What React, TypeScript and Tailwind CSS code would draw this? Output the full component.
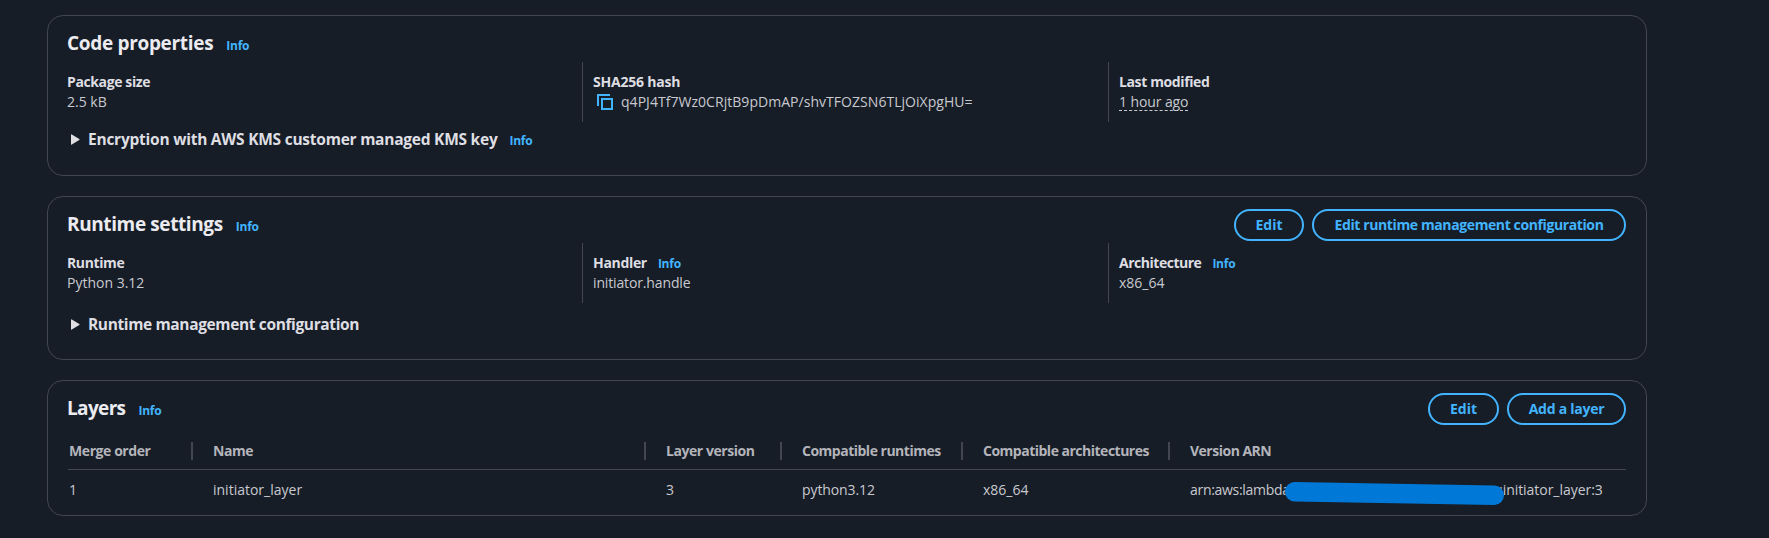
import type { ReactNode } from 'react';

function Info({ className = '' }: { className?: string }) {
  return (
    <a className={`text-[12px] font-bold tracking-[-0.25px] text-[#42b4ff] ${className}`}>Info</a>
  );
}

function Card({ className, children }: { className: string; children: ReactNode }) {
  return (
    <section className={`w-[1600px] rounded-2xl border border-[#424650] bg-[#161d26] px-5 ${className}`}>
      {children}
    </section>
  );
}

function CardHeader({ title, tracking, children }: { title: string; tracking: string; children?: ReactNode }) {
  return (
    <header className="flex h-[46px] items-start justify-between">
      <div className="-ml-px flex items-baseline gap-[13px] pt-[15px] leading-6">
        <h2 className={`text-[19px] font-bold leading-6 text-[#ebebf0] ${tracking}`}>{title}</h2>
        <Info />
      </div>
      <div className="flex gap-2 pt-3">{children}</div>
    </header>
  );
}

function Button({ className, children }: { className: string; children: ReactNode }) {
  return (
    <button
      className={`flex h-8 items-center justify-center rounded-full border-2 border-[#42b4ff] text-[14px] font-bold leading-5 whitespace-nowrap text-[#42b4ff] ${className}`}
    >
      {children}
    </button>
  );
}

function Field({ label, tracking, info, className, children }: {
  label: string;
  tracking: string;
  info?: boolean;
  className: string;
  children: ReactNode;
}) {
  return (
    <div className={`h-[60px] py-[10px] text-[14px] leading-5 text-[#c9c9d0] ${className}`}>
      <div className="flex h-5 items-baseline gap-[11px]">
        <span className={`font-bold text-[#dedee3] ${tracking}`}>{label}</span>
        {info && <Info />}
      </div>
      {children}
    </div>
  );
}

const FIRST = '-ml-px w-[515px]';
const SECOND = 'w-[526px] border-l border-[#424650] pl-[10px]';
const THIRD = 'flex-1 border-l border-[#424650] pl-[10px]';

function Expandable({ title, tracking, info, className }: {
  title: string;
  tracking: string;
  info?: boolean;
  className: string;
}) {
  return (
    <div className={`flex h-6 items-baseline pl-[3px] leading-6 ${className}`}>
      <svg className="mr-2 h-[11px] w-[9px] self-center" viewBox="0 0 9 11">
        <path d="M0 .8Q0 0 .8 .4L8.3 5Q8.8 5.5 8.3 6L.8 10.6Q0 11 0 10.2Z" fill="#dedee3" />
      </svg>
      <h3 className={`text-[15.5px] font-bold text-[#dedee3] ${tracking}`}>{title}</h3>
      {info && <Info className="ml-3" />}
    </div>
  );
}

function CopyIcon() {
  return (
    <svg className="h-4 w-4" viewBox="0 0 16 16" fill="none" stroke="#42b4ff" strokeWidth="2">
      <path d="M5 5h10v10H5z" />
      <path d="M1 12V1h12" />
    </svg>
  );
}

function Heading({ className = 'tracking-[-0.45px]', last, children }: { className?: string; last?: boolean; children: ReactNode }) {
  return (
    <div className={`flex items-center justify-between pl-5 whitespace-nowrap ${className}`}>
      <span>{children}</span>
      {!last && <span className="h-[18px] w-[2px] bg-[#424650]" />}
    </div>
  );
}

const COLUMNS = 'grid grid-cols-[125px_453px_136px_181px_207px_456px]';

export default function App() {
  return (
    <main className="flex min-h-[538px] flex-col gap-5 bg-[#161d26] pt-[15px] pl-[47px] font-['Open_Sans','Noto_Sans',sans-serif]">
      <Card className="h-[161px]">
        <CardHeader title="Code properties" tracking="tracking-[-0.32px]" />
        <div className="flex">
          <Field label="Package size" tracking="tracking-[-0.38px]" className={FIRST}>
            2.5 kB
          </Field>
          <Field label="SHA256 hash" tracking="tracking-[-0.2px]" className={SECOND}>
            <div className="flex h-5 items-center gap-2 pl-1">
              <CopyIcon />
              <span className="tracking-[0.04px]">q4PJ4Tf7Wz0CRjtB9pDmAP/shvTFOZSN6TLjOiXpgHU=</span>
            </div>
          </Field>
          <Field label="Last modified" tracking="tracking-[-0.38px]" className={THIRD}>
            <span className="block h-[19px] w-[69px] border-b border-dashed border-[#c9c9d0] tracking-[-0.1px] whitespace-nowrap">
              1 hour ago
            </span>
          </Field>
        </div>
        <Expandable
          title="Encryption with AWS KMS customer managed KMS key"
          tracking="tracking-[-0.24px]"
          info
          className="mt-[5px]"
        />
      </Card>

      <Card className="h-[164px]">
        <CardHeader title="Runtime settings" tracking="tracking-[-0.39px]">
          <Button className="w-[70px]">Edit</Button>
          <Button className="w-[314px] tracking-[-0.39px]">Edit runtime management configuration</Button>
        </CardHeader>
        <div className="flex">
          <Field label="Runtime" tracking="tracking-[-0.38px]" className={FIRST}>
            Python 3.12
          </Field>
          <Field label="Handler" tracking="tracking-[-0.32px]" info className={SECOND}>
            <span className="tracking-[-0.14px]">initiator.handle</span>
          </Field>
          <Field label="Architecture" tracking="tracking-[-0.48px]" info className={THIRD}>
            x86_64
          </Field>
        </div>
        <Expandable title="Runtime management configuration" tracking="tracking-[-0.37px]" className="mt-[9px]" />
      </Card>

      <Card className="h-[136px]">
        <CardHeader title="Layers" tracking="tracking-[-0.65px]">
          <Button className="w-[71px]">Edit</Button>
          <Button className="w-[119px] tracking-[-0.25px]">Add a layer</Button>
        </CardHeader>
        <div
          className={`${COLUMNS} h-[43px] border-b border-[#424650] pt-[6px] text-[14px] font-bold leading-5 text-[#b4b4bb]`}
        >
          <div className="flex items-center justify-between pl-px tracking-[-0.42px]">
            <span>Merge order</span>
            <span className="h-[18px] w-[2px] bg-[#424650]" />
          </div>
          <Heading>Name</Heading>
          <Heading>Layer version</Heading>
          <Heading className="tracking-[-0.5px]">Compatible runtimes</Heading>
          <Heading className="tracking-[-0.5px]">Compatible architectures</Heading>
          <Heading last className="tracking-[-0.5px]">Version ARN</Heading>
        </div>
        <div className={`${COLUMNS} h-10 items-center text-[14px] leading-5 text-[#c9c9d0]`}>
          <div className="pl-px">1</div>
          <div className="pl-5">initiator_layer</div>
          <div className="pl-5">3</div>
          <div className="pl-5 tracking-[-0.1px]">python3.12</div>
          <div className="pl-5">x86_64</div>
          <div className="relative flex pl-5">
            <span className="w-[309px] tracking-[-0.3px]">arn:aws:lambda</span>
            <span className="tracking-[-0.04px] whitespace-nowrap">:initiator_layer:3</span>
            <svg className="absolute top-0 left-[114px] h-[28px] w-[222px]" viewBox="0 0 222 28">
              <path d="M10.6 11.7L210.3 15.3" stroke="#0078d7" strokeWidth="19.4" strokeLinecap="round" />
            </svg>
          </div>
        </div>
      </Card>
    </main>
  );
}
